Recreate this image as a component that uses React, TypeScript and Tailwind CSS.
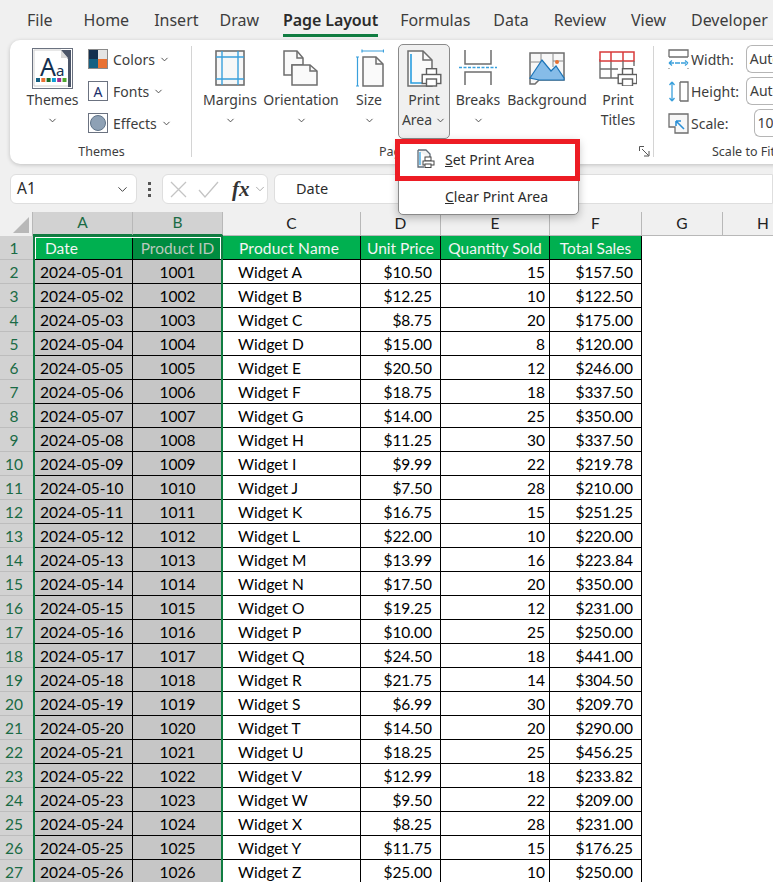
import { ChevronDown } from 'lucide-react';

const widgets = [
  ['$10.50', 15, '$157.50'], ['$12.25', 10, '$122.50'], ['$8.75', 20, '$175.00'], ['$15.00', 8, '$120.00'],
  ['$20.50', 12, '$246.00'], ['$18.75', 18, '$337.50'], ['$14.00', 25, '$350.00'], ['$11.25', 30, '$337.50'],
  ['$9.99', 22, '$219.78'], ['$7.50', 28, '$210.00'], ['$16.75', 15, '$251.25'], ['$22.00', 10, '$220.00'],
  ['$13.99', 16, '$223.84'], ['$17.50', 20, '$350.00'], ['$19.25', 12, '$231.00'], ['$10.00', 25, '$250.00'],
  ['$24.50', 18, '$441.00'], ['$21.75', 14, '$304.50'], ['$6.99', 30, '$209.70'], ['$14.50', 20, '$290.00'],
  ['$18.25', 25, '$456.25'], ['$12.99', 18, '$233.82'], ['$9.50', 22, '$209.00'], ['$8.25', 28, '$231.00'],
  ['$11.75', 15, '$176.25'], ['$25.00', 10, '$250.00'],
];

const tabs = [
  ['File', 'ml-[27px]'], ['Home', 'ml-[31px]'], ['Insert', 'ml-[25px]'], ['Draw', 'ml-[21px]'],
  ['Page Layout', 'ml-[24px]'], ['Formulas', 'ml-[22px]'], ['Data', 'ml-[23px]'], ['Review', 'ml-[25px]'],
  ['View', 'ml-[25px]'], ['Developer', 'ml-[25px]'],
];

const gridCols = 'grid grid-cols-[33px_100px_90px_138px_80px_109px_92px_81px_81px] grid-rows-[24px] h-[24px]';
const cellBorder = 'border-r border-b border-black flex items-start leading-[24px]';

const Chev = ({ className = '' }: { className?: string }) => (
  <ChevronDown size={11} strokeWidth={2} className={`text-[#444] ${className}`} />
);

function ThemesIcon() {
  return (
    <svg width="41" height="41" viewBox="0 0 41 41">
      <rect x="0.5" y="0.5" width="40" height="40" fill="#fff" stroke="#6b7280" />
      <path d="M2 2h27l9 9v27H2z" fill="#fff" stroke="#d0d0d0" />
      <path d="M29 2h10v37h-3V11z" fill="#4b5568" />
      <path d="M29 2l7 8h-7z" fill="#d9d9d9" />
      <text x="8" y="28" fontSize="25" fill="#14304f" fontFamily="Noto Sans">A</text>
      <text x="24" y="28" fontSize="15" fill="#14304f" fontFamily="Noto Sans">a</text>
      {['#156082', '#e97132', '#196b24', '#0f9ed5', '#a02b93', '#4ea72e'].map((c, i) => (
        <rect key={c} x={4 + i * 5.3} y="30" width="4" height="4" fill={c} />
      ))}
    </svg>
  );
}

function MarginsIcon() {
  return (
    <svg width="30" height="36" viewBox="0 0 30 36" fill="none">
      <rect x="1" y="1" width="28" height="34" fill="#f7f7f7" stroke="#6e6e6e" strokeWidth="1.6" />
      <path d="M7 1v34M23 1v34M1 7h28M1 29h28" stroke="#3aa0dc" strokeWidth="1.4" />
    </svg>
  );
}

function OrientationIcon() {
  return (
    <svg width="36" height="36" viewBox="0 0 36 36" fill="none" stroke="#6e6e6e" strokeWidth="1.5">
      <path d="M1 1h13l6 7v7H9v10H1z" fill="#fafafa" />
      <path d="M14 1v7h6" />
      <path d="M9 15h18l7 6v14H9z" fill="#fafafa" />
      <path d="M27 15v6h7" />
    </svg>
  );
}

function SizeIcon() {
  return (
    <svg width="29" height="38" viewBox="0 0 29 38" fill="none">
      <path d="M7 2h22M7 .5v3M28.500 .5v3M1 8h3M2.500 8v29M1 37h3" stroke="#3aa0dc" strokeWidth="1.2" />
      <path d="M8 8h13l7 7v22H8z" fill="#fafafa" stroke="#6e6e6e" strokeWidth="1.5" />
      <path d="M21 8v7h7" stroke="#6e6e6e" strokeWidth="1.5" />
    </svg>
  );
}

function Printer({ x, y }: { x: number; y: number }) {
  return (
    <g transform={`translate(${x} ${y})`} stroke="#5f5f5f" strokeWidth="1.4" fill="#fff">
      <rect x="5" y="0.700" width="10" height="6" />
      <rect x="0.700" y="6.500" width="18.600" height="9" />
      <rect x="5" y="11" width="10" height="7" />
    </g>
  );
}

function PrintAreaIcon() {
  return (
    <svg width="35" height="38" viewBox="0 0 35 38" fill="none">
      <path d="M1 1h15l9 9v26H1z" fill="#fafafa" stroke="#6e6e6e" strokeWidth="1.5" />
      <path d="M16 1v9h9" stroke="#6e6e6e" strokeWidth="1.5" />
      <path d="M4 4v29h14" stroke="#2a9ee0" strokeWidth="1.6" />
      <Printer x={14.500} y={18} />
    </svg>
  );
}

function BreaksIcon() {
  return (
    <svg width="38" height="36" viewBox="0 0 38 36" fill="none">
      <path d="M6 0v14h26V0M6 35V22h26v13" stroke="#6e6e6e" strokeWidth="1.5" />
      <path d="M0 17.500h38" stroke="#3aa0dc" strokeWidth="1.4" strokeDasharray="3 1.500" />
    </svg>
  );
}

function BackgroundIcon() {
  return (
    <svg width="36" height="33" viewBox="0 0 36 33" fill="none">
      <path d="M1 1h34v27H10l-4 4H1z" fill="#f7f7f7" stroke="#6e6e6e" strokeWidth="1.5" />
      <path d="M12 1v10M24 1v14M1 10h11M24 9h11" stroke="#8a8a8a" />
      <path d="M1 26l12-18 9 11 5-5 8 12v2H10z" fill="#86bce8" stroke="#1b74b8" strokeWidth="1.2" />
      <circle cx="28" cy="10" r="2" fill="#e97132" />
    </svg>
  );
}

function PrintTitlesIcon() {
  return (
    <svg width="38" height="35" viewBox="0 0 38 35" fill="none">
      <path d="M1 8v19h18M12 8v19M1 18h18" stroke="#6e6e6e" strokeWidth="1.4" />
      <rect x="1" y="1" width="34" height="9" stroke="#d83b3b" strokeWidth="1.500" fill="#fff" />
      <path d="M12 1v9M24 1v9" stroke="#d83b3b" strokeWidth="1.500" />
      <path d="M24 10v7M35 10v5" stroke="#6e6e6e" strokeWidth="1.4" />
      <Printer x={18.500} y={17} />
    </svg>
  );
}

function BigButton({ label, icon, w, chevron = true }: { label: string; icon: React.ReactNode; w: string; chevron?: boolean }) {
  return (
    <div className={`${w} shrink-0 flex flex-col items-center`}>
      <div className="h-[44px] flex items-center justify-center">{icon}</div>
      <div className="leading-[20px] whitespace-nowrap">{label}</div>
      {chevron && <Chev className="mt-[5px]" />}
    </div>
  );
}

function ThemeRow({ label, icon }: { label: string; icon: React.ReactNode }) {
  return (
    <div className="h-[32px] flex items-center gap-[5px]">
      {icon}
      <span>{label}</span>
      <Chev className="-ml-[1px]" />
    </div>
  );
}

function ScaleRow({ label, value, icon, boxClass }: { label: string; value: string; icon: React.ReactNode; boxClass: string }) {
  return (
    <div className="h-[32px] flex items-center">
      <div className="w-[24px] flex justify-center">{icon}</div>
      <span className="ml-[1px]">{label}</span>
      <div className={`${boxClass} h-[28px] border border-[#b5b5b5] rounded-l-[6px] border-r-0 pl-[3px] leading-[26px] bg-white`}>{value}</div>
    </div>
  );
}

function Ribbon() {
  return (
    <div className="ml-[10px] h-[124px] w-[900px] bg-white rounded-l-[10px] shadow-[0_1px_4px_rgba(0,0,0,0.2)] flex text-[14px] text-[#3d3d3d] relative">
      {/* Themes group */}
      <div className="w-[181px] shrink-0 h-full relative">
        <div className="flex pt-[6px] pl-[16px]">
          <BigButton label="Themes" w="w-[53px]" icon={<ThemesIcon />} />
          <div className="ml-[9px] -mt-[3px] flex flex-col">
            <ThemeRow label="Colors" icon={
              <div className="w-[20px] h-[20px] grid grid-cols-2 border border-[#8a8a8a]">
                <div className="bg-[#14304f]" /><div className="bg-[#e4e4e4]" />
                <div className="bg-[#156082]" /><div className="bg-[#e97132]" />
              </div>
            } />
            <ThemeRow label="Fonts" icon={
              <div className="w-[20px] h-[20px] border border-[#6b7280] flex items-center justify-center text-[14px] text-[#1a2f6b] bg-white">A</div>
            } />
            <ThemeRow label="Effects" icon={
              <div className="w-[20px] h-[20px] border border-[#6b7280] flex items-center justify-center bg-white">
                <div className="w-[16px] h-[16px] rounded-full bg-[#8ea1b5] border border-[#5f7388]" />
              </div>
            } />
          </div>
        </div>
        <div className="absolute left-0 right-0 top-[103px] text-center text-[12.5px] leading-[18px] pl-[2px]">Themes</div>
      </div>
      <div className="w-px shrink-0 h-[111px] mt-[6px] bg-[#d4d4d4]" />

      {/* Page Setup group */}
      <div className="w-[461px] shrink-0 h-full relative">
        <div className="flex pt-[6px] pl-[9px]">
          <BigButton label="Margins" w="w-[58px]" icon={<MarginsIcon />} />
          <BigButton label="Orientation" w="w-[84px]" icon={<OrientationIcon />} />
          <BigButton label="Size" w="w-[52px]" icon={<SizeIcon />} />
          <div className="w-[52px] shrink-0 h-[95px] -mt-[2px] ml-[3px] bg-[#f0f0f0] border border-[#8a8a8a] rounded-[5px] flex flex-col items-center">
            <div className="h-[45px] pt-[3px] flex items-center justify-center"><PrintAreaIcon /></div>
            <div className="leading-[20px]">Print</div>
            <div className="leading-[20px] flex items-center gap-[3px]">Area<Chev /></div>
          </div>
          <BigButton label="Breaks" w="w-[56px]" icon={<BreaksIcon />} />
          <BigButton label="Background" w="w-[82px]" icon={<BackgroundIcon />} chevron={false} />
          <div className="w-[60px] shrink-0 flex flex-col items-center">
            <div className="h-[44px] flex items-center justify-center"><PrintTitlesIcon /></div>
            <div className="leading-[20px]">Print</div>
            <div className="leading-[20px]">Titles</div>
          </div>
        </div>
        <div className="absolute left-[187px] top-[103px] text-[12.5px] leading-[18px]">Page Setup</div>
        <svg className="absolute left-[447px] top-[106px]" width="11" height="11" viewBox="0 0 11 11" fill="none" stroke="#555" strokeWidth="1">
          <path d="M.5 5V.5H5M3 3l6.500 6.500M10 5v5H5" />
        </svg>
      </div>
      <div className="w-px shrink-0 h-[111px] mt-[6px] bg-[#d4d4d4]" />

      {/* Scale to Fit group */}
      <div className="flex-1 h-full relative pl-[12px] pt-[3px]">
        <ScaleRow label="Width:" value="Auto" boxClass="ml-[12px] w-[60px]" icon={
          <svg width="21" height="21" viewBox="0 0 21 21" fill="none">
            <path d="M1 8V1h19v7M1 8h19" stroke="#6e6e6e" strokeWidth="1.3" />
            <path d="M1 14h19M1 14l3-2.500M1 14l3 2.500M20 14l-3-2.500M20 14l-3 2.500" stroke="#3aa0dc" strokeWidth="1.3" strokeDasharray="5 1" />
            <path d="M1 19v1M20 19v1" stroke="#6e6e6e" />
          </svg>
        } />
        <ScaleRow label="Height:" value="Auto" boxClass="ml-[7px] w-[60px]" icon={
          <svg width="21" height="21" viewBox="0 0 21 21" fill="none">
            <path d="M12 1h8v19h-8M12 1v19" stroke="#6e6e6e" strokeWidth="1.3" />
            <path d="M4 1v19M4 1L1.500 4M4 1l2.500 3M4 20l-2.500-3M4 20l2.500-3" stroke="#3aa0dc" strokeWidth="1.3" />
          </svg>
        } />
        <ScaleRow label="Scale:" value="100%" boxClass="ml-[25px] w-[60px]" icon={
          <svg width="21" height="21" viewBox="0 0 21 21" fill="none">
            <path d="M1 1h19v19H7v-6H1z" fill="#f7f7f7" stroke="#6e6e6e" strokeWidth="1.3" />
            <path d="M16 16L8 8M8 8v5M8 8h5" stroke="#2a8fd6" strokeWidth="1.6" />
          </svg>
        } />
        <div className="absolute left-[58px] top-[103px] text-[12.5px] leading-[18px] whitespace-nowrap">Scale to Fit</div>
      </div>
    </div>
  );
}

function FormulaBar() {
  return (
    <div className="h-[30px] mt-[10px] flex items-stretch text-[14.5px] text-[#2b2b2b]">
      <div className="ml-[10px] w-[127px] bg-white border border-[#dedede] rounded-[6px] flex items-center justify-between pl-[6px] pr-[6px]">
        <span className="text-[15.5px]">A1</span>
        <ChevronDown size={15} strokeWidth={1.6} className="text-[#444]" />
      </div>
      <div className="w-[25px] flex flex-col items-center justify-center gap-[3px]">
        <div className="w-[3px] h-[3px] bg-[#555]" />
        <div className="w-[3px] h-[3px] bg-[#555]" />
        <div className="w-[3px] h-[3px] bg-[#555]" />
      </div>
      <div className="w-[106px] bg-white border border-[#dedede] rounded-[6px] flex items-center pl-[7px]">
        <svg width="17" height="17" viewBox="0 0 17 17" fill="none" stroke="#c4c4c4" strokeWidth="1.3">
          <path d="M1 1l15 15M16 1L1 16" />
        </svg>
        <svg className="ml-[11px]" width="21" height="17" viewBox="0 0 21 17" fill="none" stroke="#c4c4c4" strokeWidth="1.3">
          <path d="M1 9l6 7L20 1" />
        </svg>
        <span className="ml-[13px] w-[18px] text-[21px] leading-[24px] font-['Liberation_Serif',serif] italic font-bold text-[#333]">fx</span>
        <ChevronDown size={14} strokeWidth={1.2} className="text-[#8a8a8a] ml-[3px]" />
      </div>
      <div className="ml-[6px] flex-1 bg-white border border-[#dedede] rounded-l-[6px] flex items-center pl-[21px]">Date</div>
    </div>
  );
}

function ColumnHeaders() {
  const heads = ['A', 'B', 'C', 'D', 'E', 'F', 'G', 'H'];
  return (
    <div className={gridCols}>
      <div className="bg-[#f0f0f0] border-r border-[#b8b8b8] flex items-end justify-end pr-[3px] pb-[3px]">
        <div className="w-0 h-0 border-l-[16px] border-l-transparent border-b-[16px] border-b-[#b8b8b8]" />
      </div>
      {heads.map((h, i) => (
        <div
          key={h}
          className={`border-r border-[#b8b8b8] flex items-center justify-center text-[15.5px] ${i < 2 ? 'bg-[#d2d2d2] text-[#1a6b45] border-b-2 border-b-[#107c41]' : 'bg-[#f0f0f0] text-[#222] border-b border-b-[#b8b8b8]'}`}
        >
          {h}
        </div>
      ))}
    </div>
  );
}

function Sheet() {
  const head = 'bg-[#00b050] text-[#f4f4f4] justify-center';
  return (
    <div className="mt-[8px] relative font-['Lato',sans-serif] text-[15.5px] text-black bg-white">
      <ColumnHeaders />
      <div className={gridCols}>
        <RowHead n={1} />
        <div className={`${cellBorder} bg-[#00b050] text-[#f4f4f4] pl-[12px]`}>Date</div>
        <div className={`${cellBorder} bg-[#008c40] text-[#b9c9bd] justify-center`}>Product ID</div>
        <div className={`${cellBorder} bg-[#00b050] text-[#f4f4f4] pl-[16px] tracking-[0.2px]`}>Product Name</div>
        <div className={`${cellBorder} ${head}`}>Unit Price</div>
        <div className={`${cellBorder} ${head}`}>Quantity Sold</div>
        <div className={`${cellBorder} ${head}`}>Total Sales</div>
      </div>
      {widgets.map((w, i) => {
        const day = String(i + 1).padStart(2, '0');
        return (
          <div key={day} className={gridCols}>
            <RowHead n={i + 2} />
            <div className={`${cellBorder} bg-[#c6c6c6] pl-[7px]`}>2024-05-{day}</div>
            <div className={`${cellBorder} bg-[#c6c6c6] justify-center`}>{1001 + i}</div>
            <div className={`${cellBorder} pl-[15px]`}>Widget {String.fromCharCode(65 + i)}</div>
            <div className={`${cellBorder} justify-end pr-[8px]`}>{w[0]}</div>
            <div className={`${cellBorder} justify-end pr-[4px]`}>{w[1]}</div>
            <div className={`${cellBorder} justify-end pr-[8px]`}>{w[2]}</div>
          </div>
        );
      })}
      {/* selection outline over columns A:B */}
      <div className="absolute left-[33px] top-[23px] w-[190px] h-[700px] border-2 border-[#107c41]" />
      <div className="absolute left-[35px] top-[25px] w-[186px] h-[22px] border border-white border-b-0" />
    </div>
  );
}

function RowHead({ n }: { n: number }) {
  return (
    <div className="bg-[#d2d2d2] border-b border-[#bdbdbd] text-[#1a6b45] flex items-start justify-center pr-[5px] leading-[24px]">{n}</div>
  );
}

function PrintMenu() {
  return (
    <>
      <div className="absolute left-[398px] top-[139px] w-[181px] h-[76px] bg-white border border-[#8a8a8a] rounded-b-[5px] shadow-[0_3px_8px_rgba(0,0,0,0.25)] text-[14px] text-[#2b2b2b]">
        <div className="h-[38px] flex items-center">
          <svg className="ml-[18px]" width="18" height="20" viewBox="0 0 18 20" fill="none">
            <path d="M1 1h8l4 4v6M1 1v17h6" stroke="#5f6b78" strokeWidth="1.3" fill="#f2f2f2" />
            <path d="M3 3v13" stroke="#2a9ee0" strokeWidth="1.2" />
            <rect x="8" y="8" width="6" height="4" fill="#fff" stroke="#444" />
            <rect x="6" y="12" width="11" height="4" fill="#fff" stroke="#444" />
            <rect x="8" y="15" width="6" height="3.500" fill="#fff" stroke="#444" />
          </svg>
          <span className="ml-[10px]"><u>S</u>et Print Area</span>
        </div>
        <div className="h-[32px] mt-[2px] flex items-center pl-[46px]">
          <span><u>C</u>lear Print Area</span>
        </div>
      </div>
      {/* red highlight round the first item */}
      <div className="absolute left-[395px] top-[139px] w-[185px] h-[42px] border-[5px] border-[#ed1c24]" />
    </>
  );
}

export default function App() {
  return (
    <div className="w-[773px] h-[882px] overflow-hidden relative bg-[#f0f0f0] font-['Noto_Sans',sans-serif]">
      <div className="h-[40px] flex items-center text-[16px] text-[#3d3d3d] whitespace-nowrap">
        {tabs.map(([t, ml]) => (
          <div key={t} className={`${ml} relative ${t === 'Page Layout' ? 'font-semibold text-[#2b2b2b] tracking-[-0.1px]' : ''}`}>
            {t}
            {t === 'Page Layout' && <div className="absolute left-0 right-0 -bottom-[5px] h-[3px] bg-[#107c41]" />}
          </div>
        ))}
      </div>
      <Ribbon />
      <FormulaBar />
      <Sheet />
      <PrintMenu />
    </div>
  );
}
